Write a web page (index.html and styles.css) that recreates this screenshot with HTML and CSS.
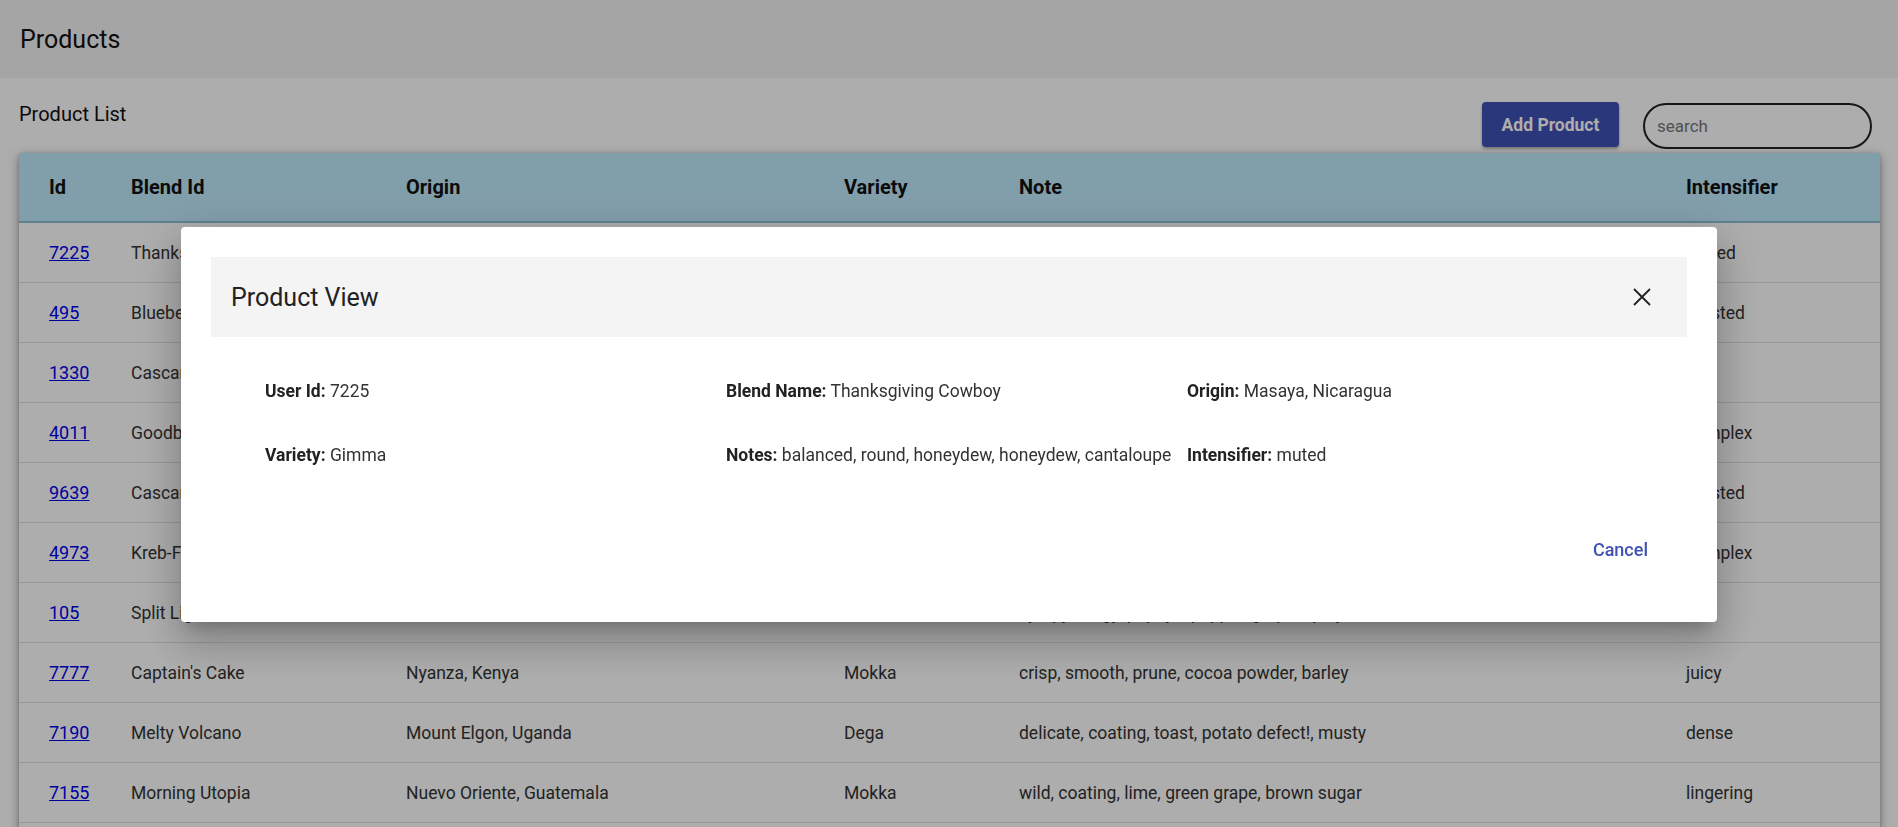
FILE: index.html
```html
<!DOCTYPE html>
<html lang="en">
<head>
<meta charset="utf-8">
<title>Products</title>
<link rel="stylesheet" href="styles.css">
</head>
<body>
<header class="app-header"><h1 class="app-title">Products</h1></header>
<main class="page">
  <div class="toolbar">
    <h2 class="list-title">Product List</h2>
    <div class="toolbar-actions">
      <button class="btn-primary" type="button">Add Product</button>
      <input class="search" type="text" placeholder="search">
    </div>
  </div>
  <div class="table">
    <div class="row head">
      <div>Id</div><div>Blend Id</div><div>Origin</div><div>Variety</div><div>Note</div><div>Intensifier</div>
    </div>
    <div class="row"><div><a href="#">7225</a></div><div>Thanksgiving Cowboy</div><div>Masaya, Nicaragua</div><div>Gimma</div><div>balanced, round, honeydew, honeydew, cantaloupe</div><div>muted</div></div>
    <div class="row"><div><a href="#">495</a></div><div>Blueberry Forrester</div><div>Huila, Colombia</div><div>Bourbon</div><div>bright, juicy, blueberry, lemon, caramel</div><div>toasted</div></div>
    <div class="row"><div><a href="#">1330</a></div><div>Cascara Cake</div><div>Yirgacheffe, Ethiopia</div><div>Heirloom</div><div>soft, tea-like, hibiscus, peach, honey</div><div>tart</div></div>
    <div class="row"><div><a href="#">4011</a></div><div>Goodbye Equinox</div><div>Tarrazu, Costa Rica</div><div>Caturra</div><div>structured, silky, cherry, almond, cocoa</div><div>complex</div></div>
    <div class="row"><div><a href="#">9639</a></div><div>Cascara Light</div><div>Antigua, Guatemala</div><div>Typica</div><div>clean, syrupy, plum, raisin, molasses</div><div>toasted</div></div>
    <div class="row"><div><a href="#">4973</a></div><div>Kreb-Full-o Coffee</div><div>Sidama, Ethiopia</div><div>Pacas</div><div>vibrant, sparkling, bergamot, lime, jasmine</div><div>complex</div></div>
    <div class="row"><div><a href="#">105</a></div><div>Split Light</div><div>Cauca, Colombia</div><div>Geisha</div><div>syrupy, tangy, papaya, pepper, grape, spicy</div><div>soft</div></div>
    <div class="row"><div><a href="#">7777</a></div><div>Captain's Cake</div><div>Nyanza, Kenya</div><div>Mokka</div><div>crisp, smooth, prune, cocoa powder, barley</div><div>juicy</div></div>
    <div class="row"><div><a href="#">7190</a></div><div>Melty Volcano</div><div>Mount Elgon, Uganda</div><div>Dega</div><div>delicate, coating, toast, potato defect!, musty</div><div>dense</div></div>
    <div class="row"><div><a href="#">7155</a></div><div>Morning Utopia</div><div>Nuevo Oriente, Guatemala</div><div>Mokka</div><div>wild, coating, lime, green grape, brown sugar</div><div>lingering</div></div>
    <div class="row"><div><a href="#">8120</a></div><div>Blacktop Solstice</div><div>Kiambu, Kenya</div><div>SL28</div><div>juicy, bright, blackcurrant, tomato, cane sugar</div><div>clean</div></div>
  </div>
</main>

<div class="backdrop">
  <div class="dialog" role="dialog">
    <div class="dialog-head">
      <h3 class="dialog-title">Product View</h3>
      <button class="close" type="button" aria-label="close">
        <svg width="18" height="18" viewBox="0 0 18 18"><path d="M1 1 L17 17 M17 1 L1 17" stroke="#222" stroke-width="1.8" fill="none"/></svg>
      </button>
    </div>
    <div class="fields">
      <div><b>User Id:</b> 7225</div>
      <div><b>Blend Name:</b> Thanksgiving Cowboy</div>
      <div><b>Origin:</b> Masaya, Nicaragua</div>
      <div><b>Variety:</b> Gimma</div>
      <div><b>Notes:</b> balanced, round, honeydew, honeydew, cantaloupe</div>
      <div><b>Intensifier:</b> muted</div>
    </div>
    <div class="actions"><button class="btn-text" type="button">Cancel</button></div>
  </div>
</div>
</body>
</html>
```

FILE: styles.css
```css
* { box-sizing: border-box; }
html, body { margin: 0; padding: 0; }
body {
  font-family: Roboto, "Liberation Sans", Arial, sans-serif;
  background: #ffffff;
  color: rgba(0,0,0,0.87);
  width: 1898px;
  height: 827px;
  overflow: hidden;
}
.app-header {
  height: 78px;
  background: #f4f4f4;
  display: flex;
  align-items: center;
  padding-left: 20px;
}
.app-title {
  margin: 0;
  font-size: 25px;
  font-weight: 400;
  color: #111;
}
.page { padding: 0 18px 0 19px; }
.toolbar {
  height: 75px;
  display: flex;
  justify-content: space-between;
  align-items: flex-start;
  padding-top: 24px;
}
.list-title {
  margin: 0;
  font-size: 20px;
  line-height: 24px;
  font-weight: 400;
  color: #111;
}
.toolbar-actions { display: flex; gap: 24px; margin-right: 8px; }
.btn-primary {
  width: 137px;
  height: 45px;
  border: none;
  border-radius: 4px;
  background: #3f51b5;
  color: #fff;
  font-family: Roboto, sans-serif;
  font-size: 17.5px;
  font-weight: 700;
  box-shadow: 0 2px 3px rgba(0,0,0,0.3);
}
.search {
  width: 229px;
  height: 46px;
  margin-top: 1px;
  border: 2px solid #222;
  border-radius: 23px;
  background: transparent;
  padding: 0 12px;
  font-family: Roboto, sans-serif;
  font-size: 17px;
}
.search::placeholder { color: #777; }
.table {
  background: #fff;
  box-shadow: 0 3px 10px rgba(0,0,0,0.35), 0 1px 3px rgba(0,0,0,0.2);
}
.row {
  display: grid;
  grid-template-columns: 82px 275px 438px 175px 667px 1fr;
  padding-left: 30px;
  height: 60px;
  align-items: center;
  border-bottom: 1px solid rgba(0,0,0,0.12);
  font-size: 17.5px;
  color: #333;
  white-space: nowrap;
}
.row.head {
  height: 70px;
  background: #bfeafc;
  font-size: 20px;
  font-weight: 700;
  color: #111;
  border-bottom: 2px solid rgba(0,60,90,0.25);
}
.row a { color: #0000ee; text-decoration: underline; font-size: 18px; }

.backdrop {
  position: fixed;
  inset: 0;
  background: rgba(0,0,0,0.32);
  display: flex;
  justify-content: center;
  align-items: flex-start;
}
.dialog {
  margin-top: 227px;
  width: 1536px;
  height: 395px;
  background: #fff;
  border-radius: 4px;
  padding: 30px;
  box-shadow: 0 11px 15px -7px rgba(0,0,0,.2), 0 24px 38px 3px rgba(0,0,0,.14), 0 9px 46px 8px rgba(0,0,0,.12);
  display: flex;
  flex-direction: column;
}
.dialog-head {
  height: 80px;
  background: #f4f4f4;
  display: flex;
  align-items: center;
  justify-content: space-between;
  padding: 0 36px 0 20px;
}
.dialog-title {
  margin: 0;
  font-size: 25px;
  font-weight: 400;
  color: #222;
}
.close {
  border: none;
  background: transparent;
  padding: 0;
  width: 18px;
  height: 18px;
  display: flex;
}
.fields {
  display: grid;
  grid-template-columns: 461px 461px 461px;
  row-gap: 40px;
  padding-left: 54px;
  margin-top: 42px;
  font-size: 17.5px;
  line-height: 24px;
  color: #333;
}
.fields b { font-weight: 700; color: #222; }
.actions {
  margin-top: 64px;
  display: flex;
  justify-content: flex-end;
  padding-right: 23px;
}
.btn-text {
  height: 36px;
  border: none;
  background: transparent;
  padding: 0 16px;
  color: #3f51b5;
  font-family: Roboto, sans-serif;
  font-size: 18px;
  font-weight: 500;
}
```
